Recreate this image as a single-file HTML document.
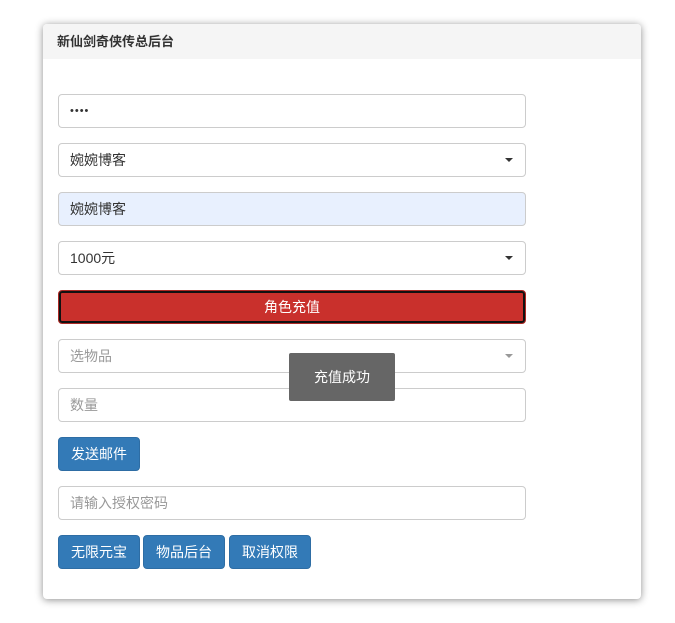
<!DOCTYPE html>
<html><head><meta charset="utf-8"><style>
body{margin:0;width:675px;height:623px;background:#fff;font-family:"Liberation Sans","Noto Sans CJK SC",sans-serif;font-size:14px;color:#333;position:relative}
.panel{position:absolute;left:43px;top:24px;width:598px;height:575px;border-radius:4px;box-shadow:0 1px 8px rgba(0,0,0,.45);background:#fff;overflow:hidden}
.hd{height:35px;background:#f5f5f5;font-weight:bold;font-size:13px;line-height:36px;padding-left:14px;color:#333}
.in{position:absolute;left:15px;width:466px;height:32px;border:1px solid #ccc;border-radius:4px;line-height:32px;padding-left:11px;box-sizing:content-box;width:455px}
.ph{color:#999}
.car{position:absolute;right:12px;top:14px;width:0;height:0;border-left:4px solid transparent;border-right:4px solid transparent;border-top:4px solid #333}
.btn{position:absolute;height:32px;line-height:32px;background:#337ab7;border:1px solid #2e6da4;border-radius:4px;color:#fff;text-align:center;width:80px}
</style></head><body>
<div class="panel">
<div class="hd">新仙剑奇侠传总后台</div>
<div class="in" style="top:70px;font-size:11px;letter-spacing:1px">••••</div>
<div class="in" style="top:119px">婉婉博客<span class="car"></span></div>
<div class="in" style="top:168px;background:#e8f0fe">婉婉博客</div>
<div class="in" style="top:217px">1000元<span class="car"></span></div>
<div style="position:absolute;left:15px;top:266px;width:464px;height:30px;border:1px solid #ac2925;border-radius:4px;box-shadow:inset 0 0 0 2px #111;background:#c9302c;color:#fff;text-align:center;line-height:30px;padding:1px 1px">角色充值</div>
<div class="in ph" style="top:315px">选物品<span class="car" style="border-top-color:#999"></span></div>
<div class="in ph" style="top:364px">数量</div>
<div class="btn" style="left:15px;top:413px">发送邮件</div>
<div class="in ph" style="top:462px">请输入授权密码</div>
<div class="btn" style="left:15px;top:511px">无限元宝</div>
<div class="btn" style="left:100px;top:511px">物品后台</div>
<div class="btn" style="left:186px;top:511px">取消权限</div>
</div>
<div style="position:absolute;left:289px;top:353px;width:106px;height:48px;background:#666;border-radius:2px;color:#fff;text-align:center;line-height:48px">充值成功</div>
</body></html>
